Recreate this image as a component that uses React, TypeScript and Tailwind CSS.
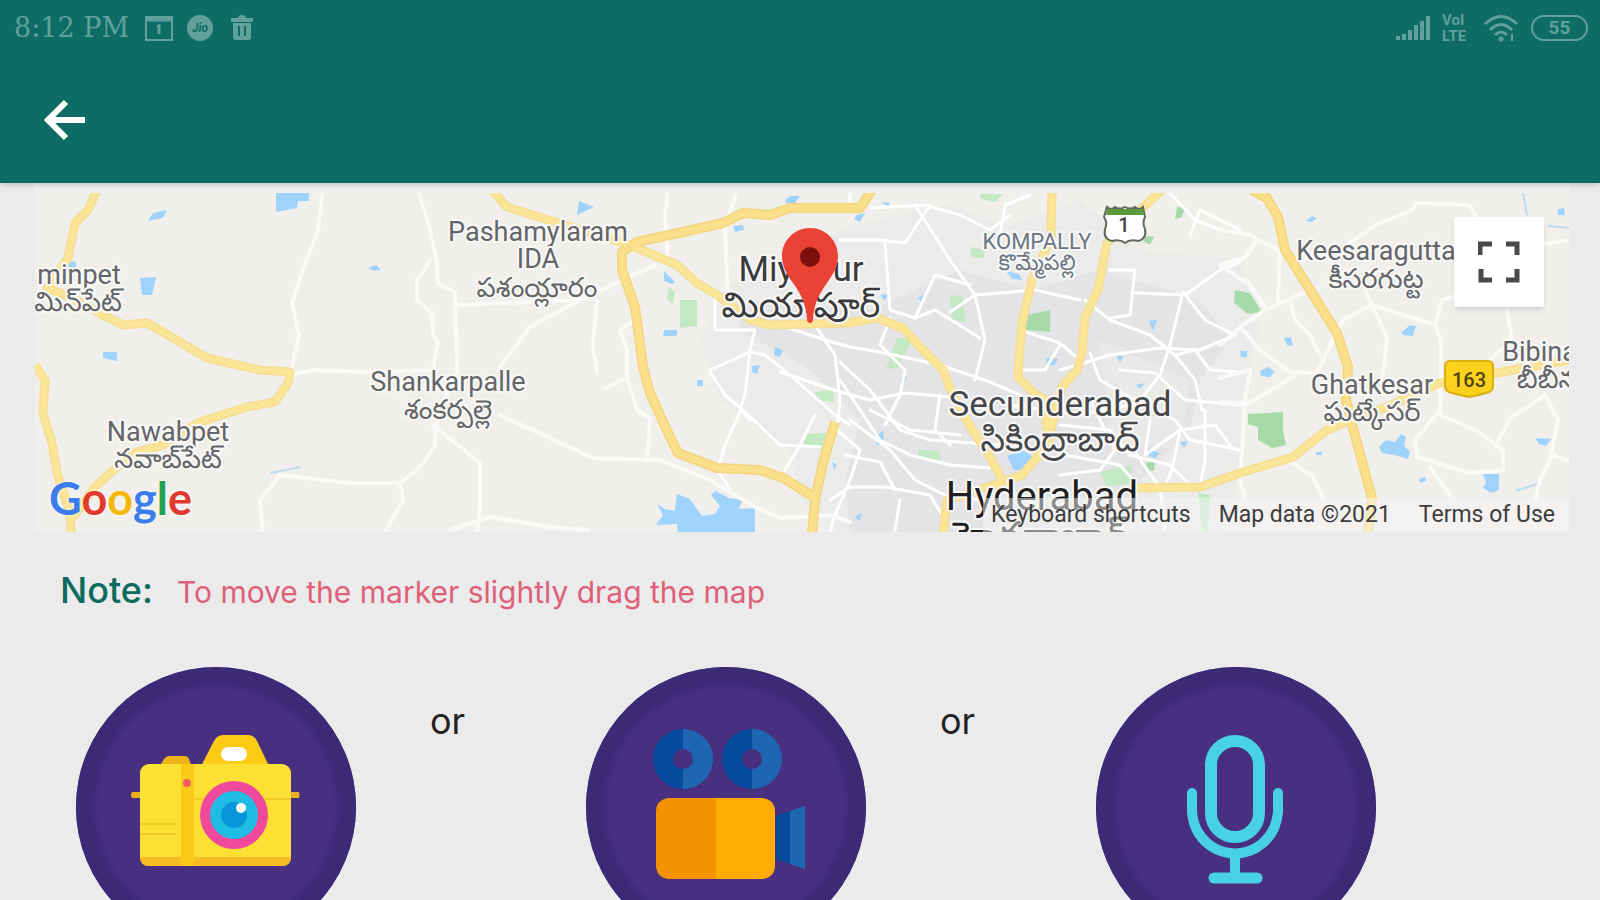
import React from 'react';

type Label = {
    x: number;
    y: number;
    text: string;
    className: string;
};

const TOWN = 'text-[27px] fill-[#646568]';
const TOWN_TE = 'text-[27px] fill-[#646568]';

const labels: Label[] = [
    { x: 79, y: 284, text: 'minpet', className: TOWN },
    { x: 78, y: 311, text: 'మిన్‌పేట్', className: TOWN_TE },
    { x: 168, y: 441, text: 'Nawabpet', className: TOWN },
    { x: 168, y: 468, text: 'నవాబ్‌పేట్', className: TOWN_TE },
    { x: 448, y: 391, text: 'Shankarpalle', className: TOWN },
    { x: 448, y: 419, text: 'శంకర్పల్లె', className: TOWN_TE },
    { x: 538, y: 241, text: 'Pashamylaram', className: TOWN },
    { x: 538, y: 268, text: 'IDA', className: TOWN },
    { x: 537, y: 297, text: 'పశంయ్లారం', className: TOWN_TE },
    { x: 801, y: 281, text: 'Miyapur', className: 'text-[35px] fill-[#3a3a3c]' },
    { x: 801, y: 317, text: 'మియాపూర్', className: 'text-[35px] fill-[#3a3a3c]' },
    { x: 1037, y: 249, text: 'KOMPALLY', className: 'text-[22px] fill-[#6b7684]' },
    { x: 1037, y: 270, text: 'కొమ్మేపల్లి', className: 'text-[22px] fill-[#6b7684]' },
    { x: 1060, y: 416, text: 'Secunderabad', className: 'text-[35px] fill-[#46474a]' },
    { x: 1060, y: 451, text: 'సికింద్రాబాద్', className: 'text-[35px] fill-[#46474a]' },
    { x: 1042, y: 510, text: 'Hyderabad', className: 'text-[40px] fill-[#1f1f21]' },
    { x: 1042, y: 550, text: 'హైదరాబాద్', className: 'text-[40px] fill-[#1f1f21]' },
    { x: 1376, y: 260, text: 'Keesaragutta', className: TOWN },
    { x: 1376, y: 288, text: 'కీసరగుట్ట', className: TOWN_TE },
    { x: 1372, y: 394, text: 'Ghatkesar', className: TOWN },
    { x: 1372, y: 421, text: 'ఘట్కేసర్', className: TOWN_TE },
    { x: 1559, y: 361, text: 'Bibinagar', className: TOWN },
    { x: 1563, y: 388, text: 'బీబీనగర్', className: TOWN_TE },
];

const highways = [
    'M97 190L88 210L75 223L68 258L47 288L72 298L103 315L123 325L147 323L163 332L207 358L260 370L290 372L288 383L275 402L247 407L200 422L163 445L137 452L110 473L95 487L71 520',
    'M35 365L45 380L43 413L52 443L57 473L70 513L71 534',
    'M492 190L507 207L555 222L630 245L677 265L697 283L717 295L750 320L770 325L847 323L877 318L903 328L920 347L943 370L952 393L968 423L990 457L1003 482L1022 475L1048 445',
    'M1052 190L1051 237L1032 280L1022 323L1020 347L1018 377L1033 392L1045 400L1048 445',
    'M1162 190L1140 210L1107 243L1098 290L1085 317L1082 353L1077 370L1062 387L1053 420L1048 445',
    'M943 534L947 500L1003 482',
    'M1137 488L1200 487L1240 473L1293 457L1327 430L1350 420L1387 407L1440 383L1513 370L1570 360',
];

const ringRoads = [
    'M872 190L860 208L790 208L770 215L743 213L723 223L683 232L637 242L622 252L622 270L635 307L643 367L650 393L670 437L678 453L717 468L760 470L783 478L814 497',
    'M835 422L823 463L815 500L812 534',
    'M1252 190L1267 198L1278 217L1285 250L1310 290L1337 333L1348 367L1346 400L1353 428L1372 498L1368 534',
];

const countryRoads = [
    'M323 190L318 230L303 270L292 303L299 335L292 367',
    'M295 374L313 370L370 372L433 370',
    'M418 190L430 230L437 262L438 284L455 292L457 370L435 427L435 447L417 470L400 483L403 500L385 532',
    'M430 260L417 280L417 300L432 313L433 333L438 343L433 367',
    'M400 483L347 483L280 475L260 500L263 532',
    'M433 425L480 463L480 510L477 532',
    'M450 530L490 517L550 527L588 530',
    'M500 415L593 458L660 460L710 480L755 507L780 518L830 515L850 522',
    'M500 367L530 327L580 300L655 265',
    'M458 305L580 300',
    'M597 300L593 345L597 373',
    'M635 320L620 330L627 350L627 378L637 410L650 418L647 460',
    'M605 388L627 378',
    'M668 190L665 215L668 265',
    'M738 190L725 225L728 300',
];

const eastRoads = [
    'M1220 230L1250 235L1280 252L1278 300',
    'M1257 240L1245 257L1220 265L1250 285L1265 307',
    'M1220 345L1243 325L1265 310L1305 292',
    'M1243 330L1260 350L1290 372L1305 373L1317 372L1343 320L1372 305L1435 325L1442 300L1470 292',
    'M1290 300L1295 320L1310 335L1320 355',
    'M1340 250L1375 225L1412 210L1417 203L1470 205L1475 216',
    'M1365 290L1387 338L1383 375',
    'M1435 325L1441 340L1440 415L1475 430L1503 450L1503 470L1470 473L1417 457L1415 440L1440 410',
    'M1495 447L1510 418L1545 395L1558 420L1550 460L1540 480L1535 500',
    'M1552 455L1569 461',
    'M1506 305L1512 340L1490 360',
    'M1430 467L1450 495',
    'M1290 462L1312 475L1323 497',
    'M1220 378L1250 370L1245 402L1240 480L1245 497',
    'M1220 402L1250 403L1300 372',
    'M1530 246L1569 240',
];

const cityRoads = [
    'M840 240L880 240L905 243L930 205',
    'M872 208L925 205L960 215L990 230L1010 215',
    'M915 205L950 260L975 295L985 340L975 380',
    'M885 243L890 310L915 318L935 275L970 285',
    'M975 295L1035 290L1080 300',
    'M915 318L935 310L980 338',
    'M950 312L975 295',
    'M1020 330L1060 343L1080 360',
    'M1085 300L1110 320L1150 335L1175 355L1195 380L1202 410',
    'M1110 270L1135 270L1130 315L1110 318',
    'M1135 293L1185 295L1220 270L1240 262',
    'M1183 292L1205 320L1235 335L1200 350L1160 348L1110 355L1060 370',
    'M1183 292L1170 345L1160 375L1140 400',
    'M1175 355L1195 350L1210 370L1240 372',
    'M1120 370L1155 373L1185 400L1240 405',
    'M1090 353L1100 380L1135 400L1175 420L1190 440L1240 450',
    'M1190 235L1200 210L1240 230',
    'M1170 193L1195 220L1220 230',
    'M1030 195L1005 205L1000 235L1020 240',
    'M740 330L755 330L750 350L745 395L740 410L750 420',
    'M710 370L750 352L765 355L790 375L835 415L850 425',
    'M710 372L725 395L745 412L780 445L820 447',
    'M740 412L725 445L718 470L730 490',
    'M780 325L825 340L850 347L880 352L940 365L985 380L1020 395',
    'M815 325L835 355L840 400L837 430L860 450',
    'M780 372L840 392L870 400L905 393L950 397',
    'M815 415L800 445L785 470',
    'M840 362L870 390L900 430L930 440L1000 445',
    'M840 380L880 440L910 455L950 465L990 468',
    'M850 420L890 450L915 480L945 495L980 500',
    'M870 410L910 430L960 435',
    'M890 318L880 345L905 370L900 395L885 425',
    'M830 500L850 487L885 487L930 495L945 520',
    'M860 450L850 480L835 515L830 532',
    'M900 500L895 530',
    'M845 455L880 462L895 490',
    'M940 395L935 430L950 445',
    'M1010 405L1080 415L1130 405L1170 400',
    'M1060 425L1110 430L1130 455L1170 465L1190 485',
    'M1090 400L1115 450L1100 470L1060 475',
    'M1130 445L1160 488L1165 530',
    'M1150 420L1145 455L1180 430L1215 425L1230 445',
    'M1180 430L1172 470L1165 486',
    'M1205 410L1205 460L1200 486',
    'M1065 455L1120 465L1140 488',
    'M1020 370L1045 370L1060 345',
    'M715 295L715 330L750 330',
    'M850 193L850 207',
];

const water = [
    'M148 221L153 213L167 210L163 218Z',
    'M276 193H309V201H298L297 208L276 212Z',
    'M140 278L156 277L152 295L142 295Z',
    'M368 268L376 265L381 270L374 271Z',
    'M103 352H117V361L103 358Z',
    'M66 260L76 262L76 272L68 270Z',
    'M577 215L579 201L594 207Z',
    'M664 271L675 282L672 284L664 281Z',
    'M664 330H677V336H663Z',
    'M785 200L790 196H800L795 203H786Z',
    'M733 226L743 225L744 230L735 232Z',
    'M657 504L665 509L675 511L677 494L690 499L702 516L715 514L720 506L711 495L715 491L729 498L742 500L739 509L755 508V534H678L677 524L656 525L663 515Z',
    'M775 347L783 350L780 357L774 355Z',
    'M752 366L760 365L757 374L752 372Z',
    'M697 380H703V386H697Z',
    'M857 215L865 213L860 222L854 219Z',
    'M881 202L890 203L888 207Z',
    'M1006 271L1019 274L1022 280L1012 279Z',
    'M1046 358L1058 359L1054 365H1047Z',
    'M1007 456L1022 450L1033 457L1025 470H1014Z',
    'M1149 321L1157 320L1153 331Z',
    'M1116 356L1124 356L1120 362Z',
    'M1136 385L1145 383L1140 389Z',
    'M875 438L883 430L884 443L877 445Z',
    'M855 517L861 513L860 521Z',
    'M880 295L888 294L885 301Z',
    'M918 298L925 294L921 301Z',
    'M900 380L907 376L903 385Z',
    'M1148 449L1160 453L1155 458L1149 456Z',
    'M1180 442L1188 441L1184 448Z',
    'M1306 221L1312 216L1317 218L1312 222Z',
    'M1401 333L1410 325L1416 326L1413 336L1403 335Z',
    'M1284 338L1291 337L1293 346L1287 345Z',
    'M1260 371L1268 367L1275 372L1270 377L1261 376Z',
    'M1240 351H1247V357H1241Z',
    'M1379 447L1386 440L1395 442L1401 434L1406 437L1404 446L1410 452L1408 459L1394 455L1382 453Z',
    'M1483 474H1499V490L1491 493L1483 488L1486 483Z',
    'M1535 438L1551 439L1546 446L1539 444Z',
    'M1558 209L1564 208L1565 215H1558Z',
    'M1316 452H1322V455H1316Z',
    'M1419 479L1425 477L1426 481L1420 483Z',
    'M832 462L837 465L834 470Z',
];

const parks = [
    'M680 300H697V326L680 328Z',
    'M669 287L675 292L673 304L667 300Z',
    'M815 392L833 390L834 402L816 400Z',
    'M805 434L827 433L822 450L803 443Z',
    'M897 337L912 340L898 368L886 369Z',
    'M950 295L962 296L966 322L952 320Z',
    'M970 247L985 250L983 259L971 256Z',
    'M980 194H1003L995 202L981 199Z',
    'M919 449L940 452L941 461L918 459Z',
    'M1101 472L1132 465L1130 484L1106 486Z',
    'M1198 493L1210 495L1208 532L1202 530Z',
];

const woods = [
    'M1028 315L1050 310V332L1024 330Z',
    'M1177 207L1185 208L1182 217L1175 219Z',
    'M1147 236L1154 237L1150 245L1143 241Z',
    'M1235 290L1250 293L1262 312L1248 314L1234 303Z',
    'M1248 414L1283 412V430L1286 445L1272 448L1258 440V427L1248 424Z',
    'M1146 463L1155 461L1154 471L1145 470Z',
];

const MapCanvas: React.FC = () => (
    <svg
        viewBox="35 193 1534 339"
        preserveAspectRatio="xMidYMid slice"
        className="block h-[339px] w-full"
        role="img"
        aria-label="Map of Hyderabad"
    >
        <rect x="0" y="180" width="1600" height="360" fill="#f0efeb" />

        {/* Built up area */}
        <path d="M730 285L800 250L850 225L950 205L1010 225L1080 200L1140 250L1240 260L1260 330L1240 400L1245 460L1220 532H840L800 500L790 450L720 400L700 340Z" fill="#ebebea" />
        <path d="M740 300L870 310L960 270L1030 290L1100 270L1200 300L1230 340L1200 380L1190 430L1140 480L1120 532H850L845 480L860 420L810 370L740 330Z" fill="#e4e4e6" />
        <path d="M1100 340L1190 380L1180 450L1110 440Z" fill="#e9e9e8" />

        <g>{parks.map((d) => <path key={d} d={d} fill="#c3e8c4" />)}</g>
        <g>{woods.map((d) => <path key={d} d={d} fill="#a6dba9" />)}</g>
        <g>{water.map((d) => <path key={d} d={d} fill="#9fd3fb" />)}</g>
        <path d="M270 473L300 467M1516 491L1540 483M1523 193L1527 215M1548 226L1569 228" stroke="#bcdcec" strokeWidth="2" fill="none" />

        {/* Roads */}
        <g fill="none" stroke="#fff" strokeLinejoin="round" strokeLinecap="round">
            {cityRoads.map((d) => <path key={d} d={d} strokeWidth="3" />)}
            {eastRoads.map((d) => <path key={d} d={d} strokeWidth="4" stroke="#fbfaf8" />)}
            {countryRoads.map((d) => <path key={d} d={d} strokeWidth="4" stroke="#fbfaf8" />)}
        </g>
        <g fill="none" strokeLinejoin="round">
            {highways.map((d) => <path key={d} d={d} strokeWidth="9" stroke="#f5dd92" />)}
            {ringRoads.map((d) => <path key={d} d={d} strokeWidth="10" stroke="#f3d47c" />)}
            {highways.map((d) => <path key={d} d={d} strokeWidth="6" stroke="#fae596" />)}
            {ringRoads.map((d) => <path key={d} d={d} strokeWidth="7" stroke="#fae08a" />)}
        </g>

        {/* Place names */}
        <g
            textAnchor="middle"
            stroke="#f8f8f6"
            strokeWidth="4"
            strokeLinejoin="round"
            paintOrder="stroke"
            className="font-['Roboto','Noto_Sans_Telugu','Noto_Sans',sans-serif]"
        >
            {labels.map((l) => (
                <text key={l.text} x={l.x} y={l.y} className={l.className}>{l.text}</text>
            ))}
        </g>

        {/* Route shields */}
        <path d="M1107 207Q1111 211 1115 207Q1120 210 1125 207Q1130 210 1135 207Q1139 211 1143 207L1145 217Q1142 223 1145 229Q1147 239 1138 241Q1130 239 1125 243Q1120 239 1112 241Q1103 239 1105 229Q1108 223 1104 217Z" fill="#fff" stroke="#5f6b5c" strokeWidth="2" />
        <path d="M1107 209H1143L1144 215H1106Z" fill="#5c9a3c" />
        <text x="1124" y="232" textAnchor="middle" className="font-['Roboto',sans-serif] text-[20px] font-medium fill-[#444444]">1</text>
        <path d="M1450 361H1488Q1493 361 1493 366V386Q1493 392 1486 393Q1474 396 1469 397Q1464 396 1452 393Q1445 392 1445 386V366Q1445 361 1450 361Z" fill="#fcd21c" stroke="#d9b013" strokeWidth="2" />
        <text x="1469" y="387" textAnchor="middle" className="font-['Roboto',sans-serif] text-[20px] font-medium fill-[#4f4516]">163</text>

        {/* Marker */}
        <path d="M810 228C794 228 782 241 782 256C782 266 786 273 793 283C801 294 806 304 807 319Q807 323 810 323Q813 323 813 319C814 304 819 294 827 283C834 273 838 266 838 256C838 241 826 228 810 228Z" fill="#ea4335" />
        <circle cx="810" cy="257" r="10" fill="#7d100c" />
    </svg>
);

const StatusBar: React.FC = () => (
    <div className="flex h-14 items-center justify-between pl-[14px] pr-3 text-[#61a09b]">
        <div className="flex items-center">
            <span className="w-[130px] font-['DejaVu_Serif',serif] text-[27px] leading-8">8:12 PM</span>
            <svg className="h-7 w-[30px]" viewBox="0 0 30 28" fill="none" stroke="currentColor">
                <path d="M2 3H28V26H2Z" strokeWidth="2" />
                <path d="M1 5H29" strokeWidth="5" />
                <path d="M13 13L15 12V20" strokeWidth="3" />
            </svg>
            <svg className="ml-3 h-7 w-7" viewBox="0 0 28 28">
                <circle cx="14" cy="14" r="13" fill="currentColor" />
                <text x="14" y="18" textAnchor="middle" className="fill-[#0e6c66] font-['Roboto',sans-serif] text-[12px] font-bold italic">Jio</text>
            </svg>
            <svg className="ml-4 h-7 w-6" viewBox="0 0 24 28" fill="currentColor">
                <path d="M1 4H8Q8 1 12 1Q16 1 16 4H23V8H1Z" />
                <path d="M3 9H21V23Q21 26 18 26H6Q3 26 3 23ZM8 12V22H10V12ZM14 12V22H16V12Z" fillRule="evenodd" />
            </svg>
        </div>
        <div className="flex items-center">
            <svg className="h-7 w-[34px]" viewBox="0 0 34 28" stroke="currentColor" strokeWidth="4">
                <path d="M2 26V22M8 26V20M14 26V16M20 26V11M26 26V7M32 26V2" />
            </svg>
            <div className="ml-3 w-[29px] font-['Roboto',sans-serif] text-[15px] font-bold leading-4">
                <div>VoI</div>
                <div>LTE</div>
            </div>
            <svg className="ml-3 h-7 w-9" viewBox="0 0 36 28" fill="none" stroke="currentColor" strokeWidth="3">
                <path d="M2 10Q18 -5 34 10M7 16Q18 5 29 16M12 21Q18 15 24 21" />
                <circle cx="18" cy="25" r="1" />
                <path d="M29 20V27" strokeWidth="2" />
            </svg>
            <div className="ml-3 flex h-[26px] w-[57px] items-center justify-center rounded-full border-2 border-[#61a09b] font-['Roboto',sans-serif] text-[19px] font-bold leading-5">
                55
            </div>
        </div>
    </div>
);

const CameraIcon: React.FC = () => (
    <svg className="h-full w-full" viewBox="0 -17 280 280">
        <path d="M56 108H223Q224 112 223 114H56Q54 111 56 108Z" fill="#e8b021" />
        <path d="M84 82L88 75Q90 72 94 72H108Q112 72 113 75L116 84H82Z" fill="#eeb414" />
        <path d="M124 84L138 57Q141 51 147 51H172Q178 51 181 57L194 84Z" fill="#fdca14" />
        <rect x="145" y="63" width="26" height="14" rx="7" fill="#fff" />
        <rect x="64" y="80" width="151" height="102" rx="9" fill="#fde034" />
        <path d="M64 173H215Q215 182 206 182H73Q64 182 64 173Z" fill="#f6bd22" />
        <path d="M105 80H118V182H105Z" fill="#fbca16" />
        <path d="M64 140H100M64 150H100M118 115H215" stroke="#f3c925" strokeWidth="2" />
        <circle cx="111" cy="99" r="4" fill="#ef5a63" />
        <circle cx="158" cy="131" r="34" fill="#f0489b" />
        <circle cx="158" cy="131" r="24" fill="#1fbde4" />
        <circle cx="158" cy="131" r="13" fill="#0795dc" />
        <circle cx="165" cy="124" r="5" fill="#fff" />
    </svg>
);

const VideoIcon: React.FC = () => (
    <svg className="h-full w-full" viewBox="0 0 280 280">
        <g fill="none" strokeWidth="20">
            <path d="M97 72A20 20 0 0 0 97 112M166 72A20 20 0 0 0 166 112" stroke="#064c9e" />
            <path d="M97 72A20 20 0 0 1 97 112M166 72A20 20 0 0 1 166 112" stroke="#1f66b2" />
        </g>
        <path d="M190 149L204 144V197L190 192Z" fill="#064c9e" />
        <path d="M204 144L219 139V202L204 197Z" fill="#1f66b2" />
        <path d="M130 131H82Q70 133 70 145V198Q70 210 82 212H130Z" fill="#f49200" />
        <path d="M130 131H177Q189 133 189 145V198Q189 210 177 212H130Z" fill="#ffab02" />
    </svg>
);

const MicIcon: React.FC = () => (
    <svg className="h-full w-full" viewBox="0 0 280 280" fill="none" stroke="#48d0e6" strokeLinecap="round">
        <rect x="115" y="74" width="48" height="96" rx="24" strokeWidth="12" />
        <path d="M96 126V145Q98 169 118 181Q139 192 160 181Q180 169 182 145V126" strokeWidth="10" />
        <path d="M139 188V208" strokeWidth="10" />
        <path d="M118 211H161" strokeWidth="11" />
    </svg>
);

type MediaButtonProps = {
    label: string;
    children: React.ReactNode;
};

const MediaButton: React.FC<MediaButtonProps> = ({ label, children }) => (
    <button
        type="button"
        aria-label={label}
        className="size-[280px] shrink-0 rounded-full bg-[#482f80] shadow-[inset_0_0_4px_18px_#3b2a76]"
    >
        {children}
    </button>
);

const Or: React.FC = () => (
    <span className="pt-8 pl-[74px] font-['Inter',sans-serif] text-[36px] leading-[44px] text-[#222222]">or</span>
);

const App: React.FC = () => {
    return (
        <div className="flex h-screen flex-col overflow-hidden bg-[#ebebeb]">
            <header className="z-10 h-[183px] shrink-0 bg-[#0e6c66] shadow-md">
                <StatusBar />
                <div className="flex h-[127px] items-center pl-10">
                    <button type="button" aria-label="Back" className="size-12 text-white">
                        <svg viewBox="0 0 48 48" fill="none" stroke="currentColor" strokeWidth="6">
                            <path d="M26 6L8 24L26 42M8 24H45" />
                        </svg>
                    </button>
                </div>
            </header>

            <main className="grow overflow-y-auto [scrollbar-width:none]">
                {/* Location map */}
                <section className="relative mr-[31px] ml-[35px] bg-[#f1f0ee] pt-[10px]">
                    <MapCanvas />
                    <button
                        type="button"
                        aria-label="Toggle fullscreen view"
                        className="absolute top-[34px] right-[25px] flex size-[90px] items-center justify-center rounded-xs bg-white shadow-md"
                    >
                        <svg className="size-[42px]" viewBox="0 0 42 42" fill="none" stroke="#4a4a4a" strokeWidth="5">
                            <path d="M2 14V3H14M28 3H39V14M39 28V39H28M14 39H3V28" />
                        </svg>
                    </button>
                    <a
                        href="#google"
                        className="absolute bottom-1 left-[14px] font-['Lato',sans-serif] text-[45px] font-bold leading-[60px] [text-shadow:0_0_3px_white]"
                    >
                        <span className="text-[#3b7ded]">G</span>
                        <span className="text-[#e0392d]">o</span>
                        <span className="text-[#f3b70c]">o</span>
                        <span className="text-[#3b7ded]">g</span>
                        <span className="text-[#24a250]">l</span>
                        <span className="text-[#e0392d]">e</span>
                    </a>
                    <div className="absolute right-0 bottom-0 flex gap-7 bg-[#f5f5f5]/50 pr-[14px] pl-2 font-['Roboto',sans-serif] text-[23px] leading-[34px] text-[#3c3c3c]">
                        <button type="button">Keyboard shortcuts</button>
                        <span>Map data ©2021</span>
                        <a href="#terms">Terms of Use</a>
                    </div>
                </section>

                <p className="flex items-baseline gap-6 pt-9 pl-[60px] font-['Inter',sans-serif] leading-[44px]">
                    <span className="text-[36px] font-medium text-[#0b6b5c]">Note:</span>
                    <span className="text-[30px] text-[#df6078]">To move the marker slightly drag the map</span>
                </p>

                {/* Report with photo, video or voice */}
                <div className="grid grid-cols-[1fr_1fr_280px] pt-[53px] pr-56 pb-10 pl-[76px]">
                    <div className="flex">
                        <MediaButton label="Take a photo"><CameraIcon /></MediaButton>
                        <Or />
                    </div>
                    <div className="flex">
                        <MediaButton label="Record a video"><VideoIcon /></MediaButton>
                        <Or />
                    </div>
                    <MediaButton label="Record audio"><MicIcon /></MediaButton>
                </div>
            </main>
        </div>
    );
};

export default App;
